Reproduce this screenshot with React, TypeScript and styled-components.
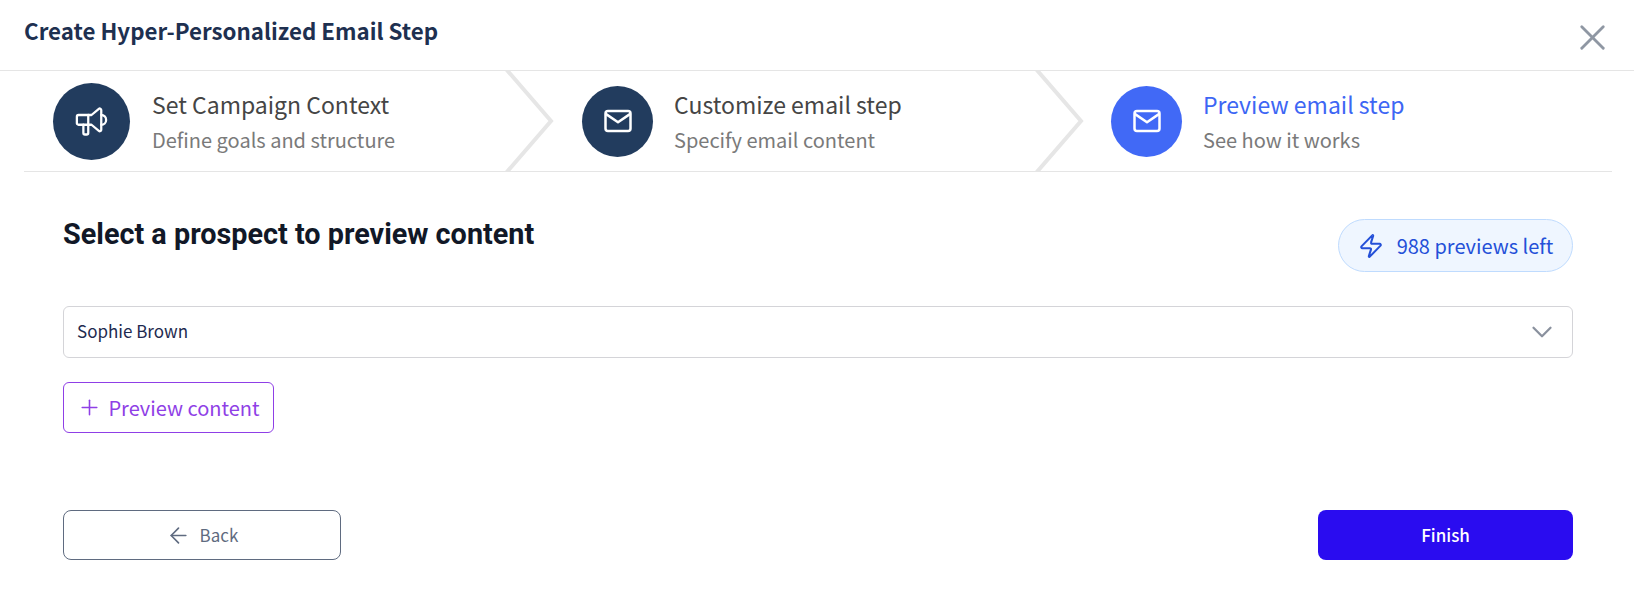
import React from "react";
import styled, { createGlobalStyle } from "styled-components";
import { X, Zap, Plus, ArrowLeft, ChevronDown } from "lucide-react";

const SANS = `"Noto Sans CJK SC", "Noto Sans", sans-serif`;

const Global = createGlobalStyle`
  html, body { margin: 0; padding: 0; background: #fff; }
  body { font-family: ${SANS}; width: 1634px; height: 612px; overflow: hidden; }
  * { box-sizing: border-box; }
`;

const Page = styled.div`
  width: 1634px;
  height: 612px;
  display: flex;
  flex-direction: column;
`;

const Header = styled.header`
  height: 71px;
  padding: 0 20px 0 24px;
  display: flex;
  align-items: center;
  justify-content: space-between;
  border-bottom: 1px solid #e5e5e5;
`;

const Title = styled.h1`
  margin: 0 0 10px;
  font-size: 22.3px;
  line-height: 32px;
  font-weight: 600;
  color: #1e3050;
`;

const CloseButton = styled.button`
  border: 0;
  padding: 0;
  background: none;
  color: #8f97a3;
  display: flex;
  margin-top: 5px;
`;

const Stepper = styled.nav`
  margin: -1px 22px 0 24px;
  height: 102px;
  display: flex;
  border-top: 1px solid #e5e5e5;
  border-bottom: 1px solid #e5e5e5;
`;

const Step = styled.div<{ $width: number; $pad: number; $gap: number }>`
  width: ${(p) => p.$width}px;
  padding-left: ${(p) => p.$pad}px;
  display: flex;
  align-items: center;
  gap: ${(p) => p.$gap}px;
`;

const Circle = styled.div<{ $size: number; $active?: boolean }>`
  width: ${(p) => p.$size}px;
  height: ${(p) => p.$size}px;
  border-radius: 50%;
  background: ${(p) => (p.$active ? "#4169f6" : "#223c5e")};
  color: #fff;
  display: flex;
  align-items: center;
  justify-content: center;
  flex: none;
`;

const StepText = styled.div`
  display: flex;
  flex-direction: column;
  gap: 6px;
  padding-bottom: 1px;
`;

const StepTitle = styled.div<{ $active?: boolean }>`
  font-size: 23px;
  line-height: 32px;
  color: ${(p) => (p.$active ? "#3d66f4" : "#454545")};
`;

const StepSub = styled.div`
  font-size: 20px;
  line-height: 28px;
  color: #7a7a7a;
`;

const Chevron = styled.svg`
  width: 50px;
  height: 100px;
  flex: none;
`;

const Main = styled.main`
  padding: 38px 61px 0 63px;
  display: flex;
  flex-direction: column;
`;

const TopRow = styled.div`
  display: flex;
  justify-content: space-between;
  align-items: flex-start;
`;

const Heading = styled.h2`
  margin: 8px 0 0;
  font-family: Roboto, sans-serif;
  font-weight: 700;
  font-size: 28.8px;
  line-height: 32px;
  color: #111827;
`;

const Pill = styled.div`
  margin-top: 9px;
  height: 53px;
  width: 235px;
  border: 1px solid #bfdbfe;
  border-radius: 27px;
  background: #eff6ff;
  color: #2450d8;
  display: flex;
  align-items: center;
  justify-content: center;
  gap: 13px;
  font-size: 20px;
  line-height: 28px;
`;

const SelectBox = styled.div`
  margin-top: 34px;
  height: 52px;
  border: 1px solid #d4d4d8;
  border-radius: 6px;
  padding: 0 13px 2px 13px;
  display: flex;
  align-items: center;
  justify-content: space-between;
  font-size: 17px;
  line-height: 24px;
  color: #1e2a4f;
`;

const Chev = styled.span`
  display: flex;
  color: #8a919e;
  margin-top: 2px;
`;

const PreviewButton = styled.button`
  align-self: flex-start;
  margin-top: 24px;
  width: 211px;
  height: 51px;
  border: 1px solid #8f3fe6;
  border-radius: 6px;
  background: #fff;
  color: #8f3fe6;
  font-family: ${SANS};
  font-size: 20px;
  line-height: 28px;
  display: flex;
  align-items: center;
  justify-content: center;
  gap: 6px;
  padding: 0;
`;

const Footer = styled.div`
  margin-top: 77px;
  display: flex;
  justify-content: space-between;
`;

const BackButton = styled.button`
  width: 278px;
  height: 50px;
  border: 1px solid #5f6b80;
  border-radius: 8px;
  background: #fff;
  color: #5f6b80;
  font-family: ${SANS};
  font-size: 17px;
  line-height: 24px;
  display: flex;
  align-items: center;
  justify-content: center;
  gap: 9px;
  padding: 0;
`;

const FinishButton = styled.button`
  width: 255px;
  height: 50px;
  border: 0;
  border-radius: 8px;
  background: #2a0cf0;
  color: #fff;
  font-family: ${SANS};
  font-size: 17px;
  font-weight: 500;
  line-height: 24px;
  padding: 0;
`;

const Arrow = () => (
  <Chevron viewBox="0 0 50 100" fill="none" stroke="#e6e6e6" strokeWidth="4">
    <path d="M1 -2 L46 50 L1 102" />
  </Chevron>
);

const Speaker = () => (
  <svg width="39" height="39" viewBox="0 0 24 24" fill="none" stroke="currentColor" strokeWidth="1.4" strokeLinecap="round" strokeLinejoin="round">
    <path d="M18 8a3 3 0 0 1 0 6" />
    <path d="M10 8v11a1 1 0 0 1 -1 1h-1a1 1 0 0 1 -1 -1v-5" />
    <path d="M12 8l4.524 -3.77a.9 .9 0 0 1 1.476 .692v12.156a.9 .9 0 0 1 -1.476 .692l-4.524 -3.77h-8a1 1 0 0 1 -1 -1v-4a1 1 0 0 1 1 -1h8" />
  </svg>
);

const Mail = () => (
  <svg width="30" height="30" viewBox="0 0 24 24" fill="none" stroke="currentColor" strokeWidth="2" strokeLinecap="round" strokeLinejoin="round">
    <rect x="2" y="4" width="20" height="16" rx="2" />
    <path d="M2.500 6.500L12 13l9.500 -6.500" />
  </svg>
);

export default function App() {
  return (
    <Page>
      <Global />
      <Header>
        <Title>Create Hyper-Personalized Email Step</Title>
        <CloseButton aria-label="Close">
          <X size={43} strokeWidth={1.6} />
        </CloseButton>
      </Header>
      <Stepper>
        <Step $width={481} $pad={29} $gap={22}>
          <Circle $size={77}><Speaker /></Circle>
          <StepText>
            <StepTitle>Set Campaign Context</StepTitle>
            <StepSub>Define goals and structure</StepSub>
          </StepText>
        </Step>
        <Arrow />
        <Step $width={480} $pad={27} $gap={21}>
          <Circle $size={71}><Mail /></Circle>
          <StepText>
            <StepTitle>Customize email step</StepTitle>
            <StepSub>Specify email content</StepSub>
          </StepText>
        </Step>
        <Arrow />
        <Step $width={500} $pad={26} $gap={21}>
          <Circle $size={71} $active><Mail /></Circle>
          <StepText>
            <StepTitle $active>Preview email step</StepTitle>
            <StepSub>See how it works</StepSub>
          </StepText>
        </Step>
      </Stepper>
      <Main>
        <TopRow>
          <Heading>Select a prospect to preview content</Heading>
          <Pill>
            <Zap size={26} strokeWidth={1.9} />
            988 previews left
          </Pill>
        </TopRow>
        <SelectBox>
          Sophie Brown
          <Chev><ChevronDown size={34} strokeWidth={1.6} /></Chev>
        </SelectBox>
        <PreviewButton>
          <Plus size={25} strokeWidth={1.5} />
          Preview content
        </PreviewButton>
        <Footer>
          <BackButton>
            <ArrowLeft size={25} strokeWidth={1.6} />
            Back
          </BackButton>
          <FinishButton>Finish</FinishButton>
        </Footer>
      </Main>
    </Page>
  );
}
